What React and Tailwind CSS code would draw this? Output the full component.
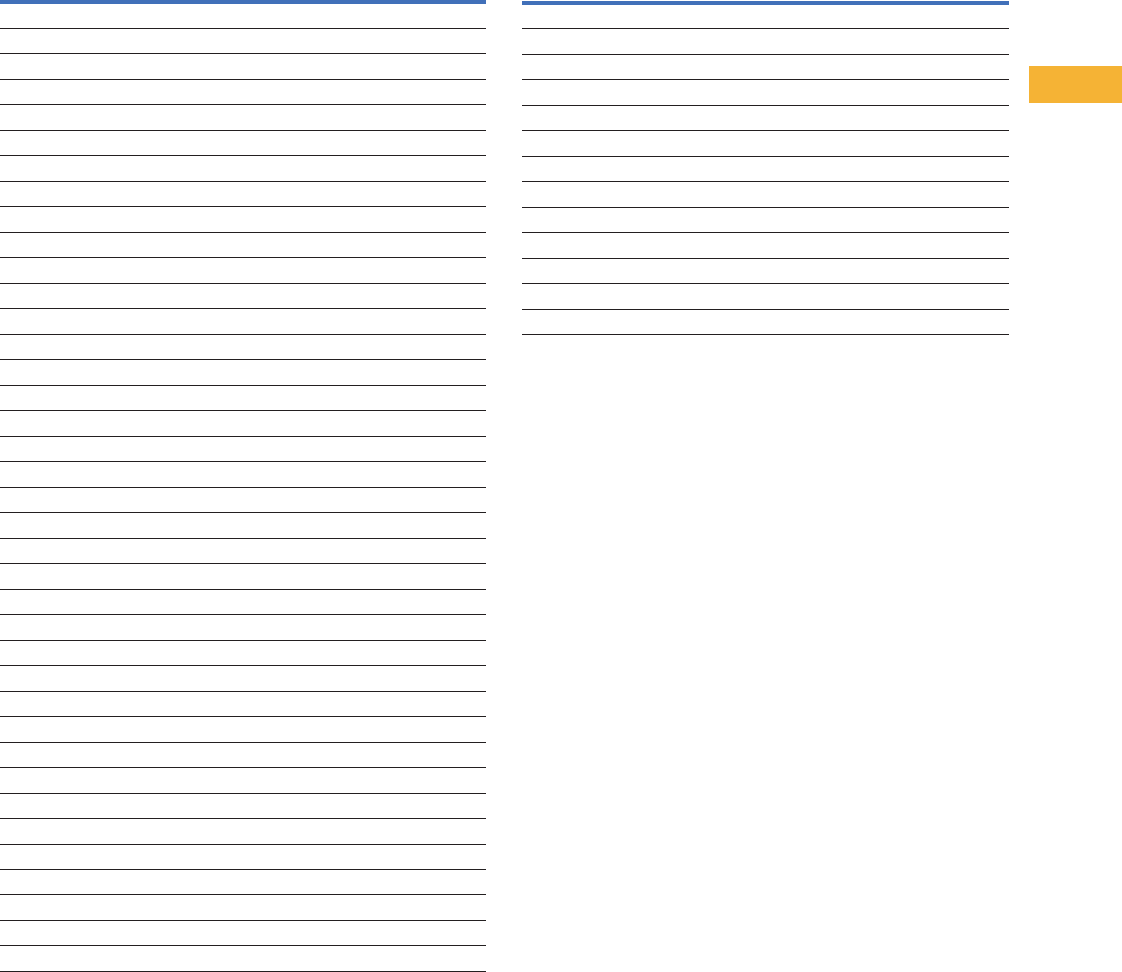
const leftRows = Array.from({ length: 38 });
const rightRows = Array.from({ length: 13 });

const RuledTable = ({ rows, first, className }) => (
  <div className={`border-t-4 border-[#4170b9] ${className}`}>
    {rows.map((_, i) => (
      <div
        key={i}
        className={`border-b border-[#231f20] ${i === 0 ? first : "h-[25.49px]"}`}
      />
    ))}
  </div>
);

export default function App() {
  return (
    <div className="flex w-[1122px] h-[972px] bg-white font-['Liberation_Sans',sans-serif]">
      <RuledTable rows={leftRows} first="h-[25px]" className="w-[486px] shrink-0" />
      <RuledTable
        rows={rightRows}
        first="h-[24.8px]"
        className="ml-[36px] mt-[0.5px] w-[487px] shrink-0 self-start"
      />
      <div className="ml-[20px] mt-[66px] h-[37px] w-[93px] shrink-0 bg-[#f5b335]" />
    </div>
  );
}
